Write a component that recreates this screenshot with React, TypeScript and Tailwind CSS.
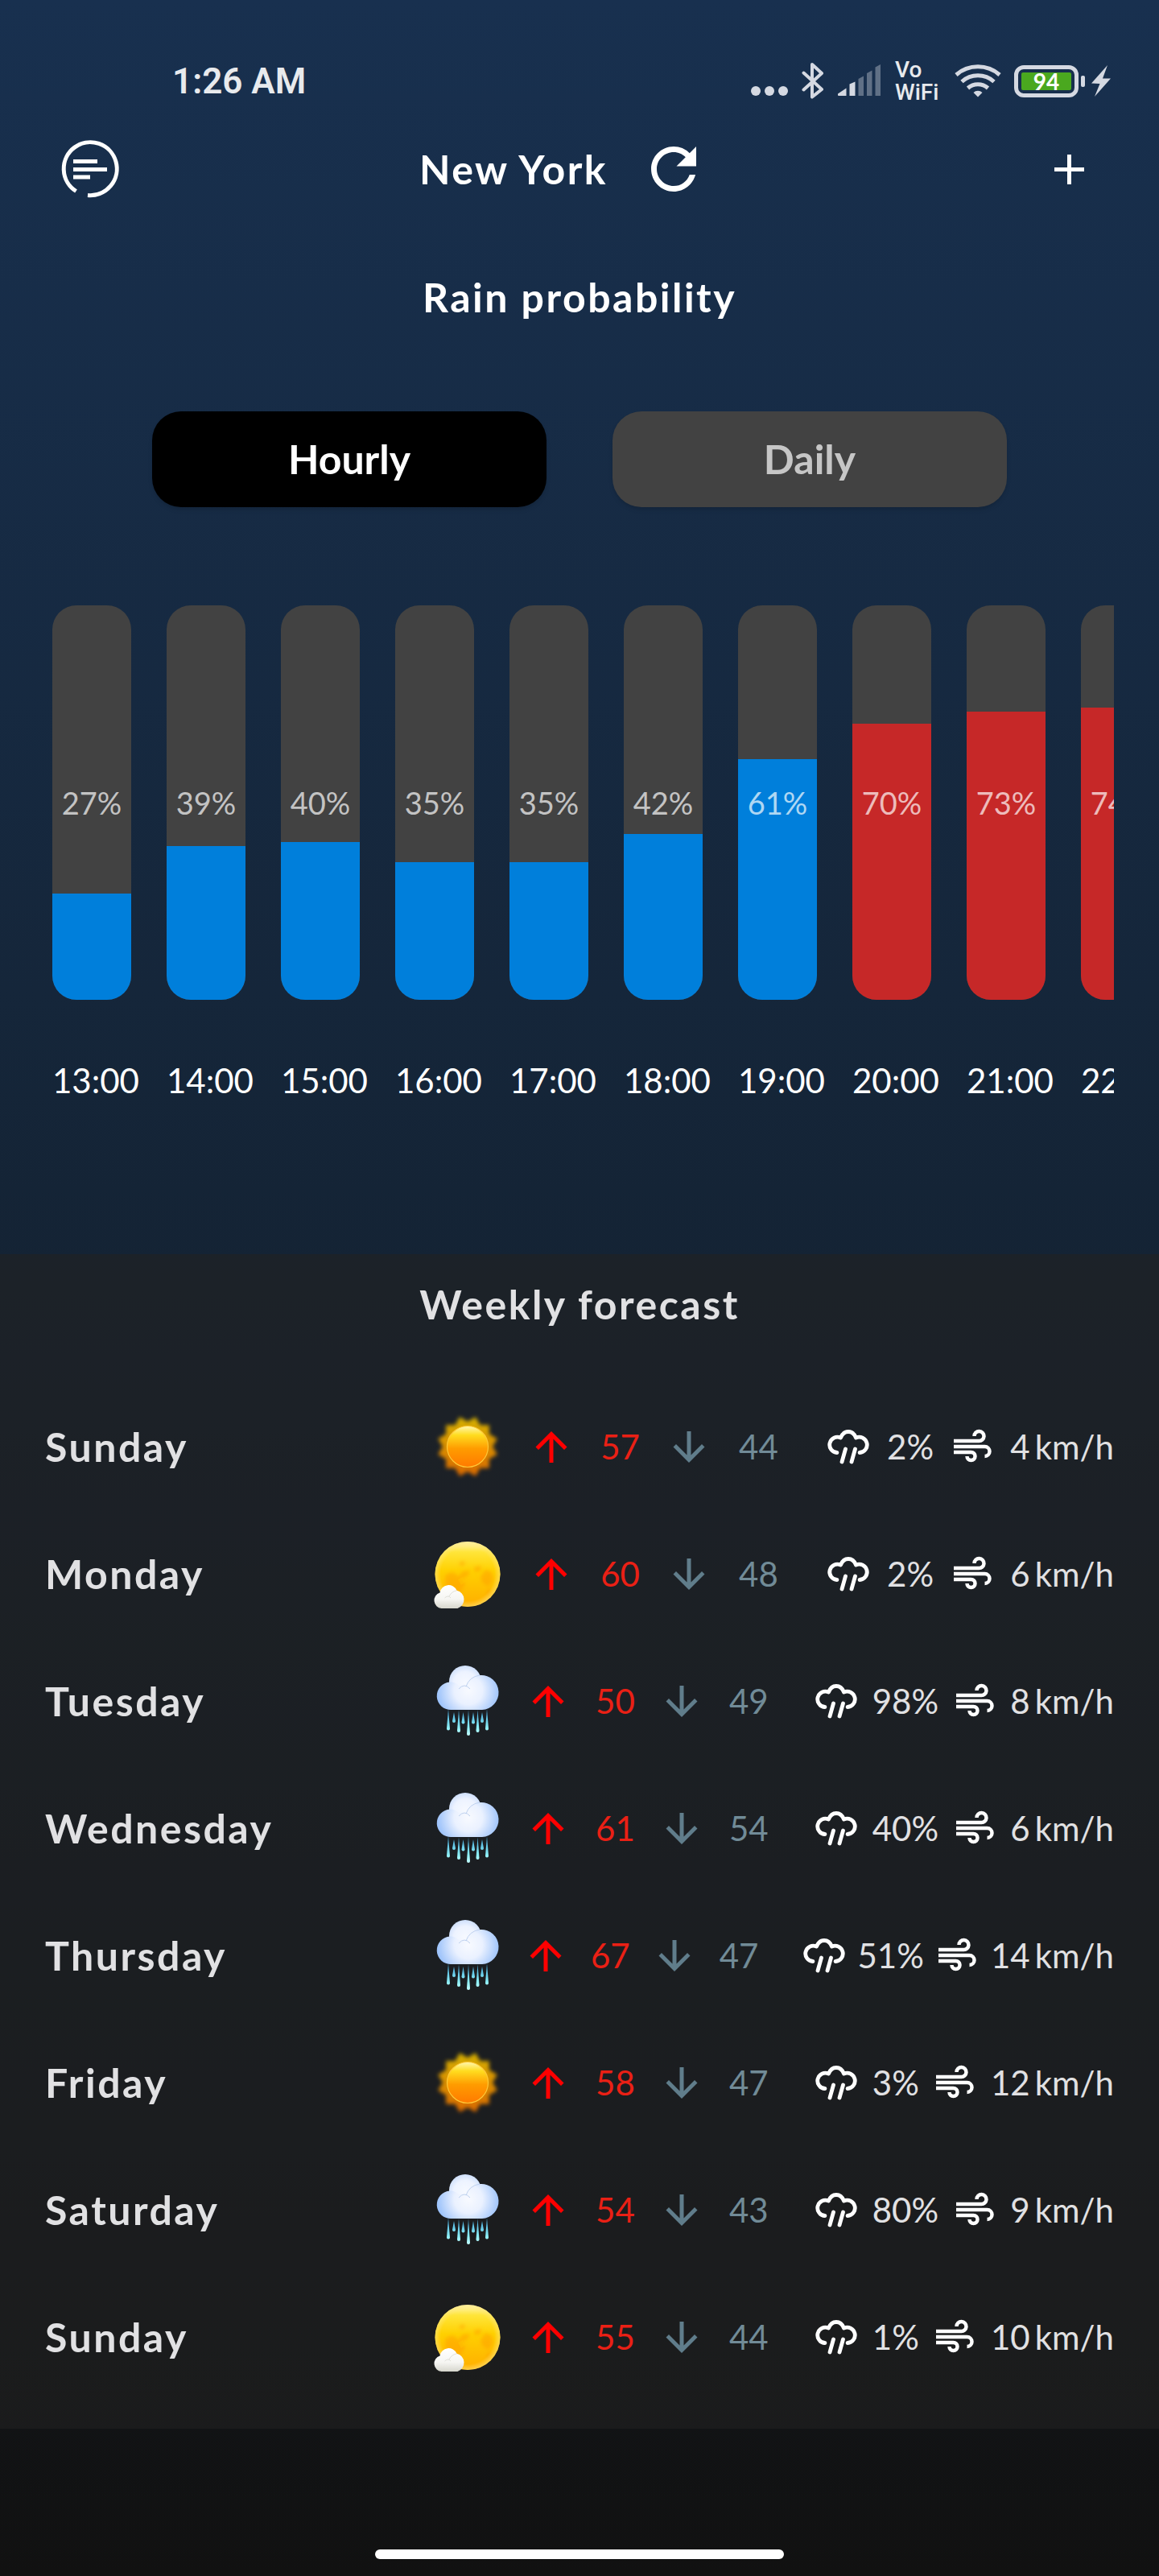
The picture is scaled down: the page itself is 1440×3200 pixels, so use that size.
import { useId, useState } from "react";

type Weather = "sun" | "partly" | "rain";

const hours = [
  { time: "13:00", rain: 27 },
  { time: "14:00", rain: 39 },
  { time: "15:00", rain: 40 },
  { time: "16:00", rain: 35 },
  { time: "17:00", rain: 35 },
  { time: "18:00", rain: 42 },
  { time: "19:00", rain: 61 },
  { time: "20:00", rain: 70 },
  { time: "21:00", rain: 73 },
  { time: "22:00", rain: 74 },
];

const days: { day: string; weather: Weather; high: number; low: number; rain: number; wind: number }[] = [
  { day: "Sunday", weather: "sun", high: 57, low: 44, rain: 2, wind: 4 },
  { day: "Monday", weather: "partly", high: 60, low: 48, rain: 2, wind: 6 },
  { day: "Tuesday", weather: "rain", high: 50, low: 49, rain: 98, wind: 8 },
  { day: "Wednesday", weather: "rain", high: 61, low: 54, rain: 40, wind: 6 },
  { day: "Thursday", weather: "rain", high: 67, low: 47, rain: 51, wind: 14 },
  { day: "Friday", weather: "sun", high: 58, low: 47, rain: 3, wind: 12 },
  { day: "Saturday", weather: "rain", high: 54, low: 43, rain: 80, wind: 9 },
  { day: "Sunday", weather: "partly", high: 55, low: 44, rain: 1, wind: 10 },
];

function StatusBar() {
  return (
    <div className="flex h-[70px] items-center justify-between pr-[60px] pl-[214px] text-[#d5d9e2]">
      <span className="font-['Roboto',sans-serif] text-[44px] leading-[70px] font-semibold text-[#e8eaed]">1:26 AM</span>
      <div className="flex items-center gap-4">
        <svg width="48" height="48" viewBox="0 0 48 48" fill="currentColor" aria-label="More notifications">
          <circle cx="7" cy="36" r="6" />
          <circle cx="24" cy="36" r="6" />
          <circle cx="41" cy="36" r="6" />
        </svg>
        <svg width="28" height="48" viewBox="0 0 28 48" fill="none" stroke="currentColor" strokeWidth="4" strokeLinecap="round" strokeLinejoin="round" aria-label="Bluetooth">
          <path d="M2.5 13.5 25 34 13 43.5V3L25 14 2.5 34.500" />
        </svg>
        <svg width="56" height="48" viewBox="0 0 56 48" fill="currentColor" aria-label="Signal">
          <path d="M1 39.500 11.500 32.500V42H2Q1 42 1 41Z" />
          <path d="M15.500 27.500 22.500 24.500V42H15.500Z" />
          <g opacity=".38">
            <path d="M26.500 21 33 17.500V42H26.500Z" />
            <path d="M37 14 43.500 10.500V42H37Z" />
            <path d="M47.500 6.500 54 3V42H47.500Z" />
          </g>
        </svg>
        <div className="flex w-[58px] flex-col font-['Roboto',sans-serif] text-[28px] leading-7 font-medium text-[#e8eaed]">
          <span>Vo</span>
          <span>WiFi</span>
        </div>
        <svg width="58" height="48" viewBox="0 0 58 48" fill="none" stroke="currentColor" strokeWidth="5" strokeLinecap="butt" aria-label="Wi-Fi">
          <path d="M2 16A41 41 0 0 1 56 16" />
          <path d="M9 24.500A30 30 0 0 1 49 24.500" />
          <path d="M16.500 32.500A19 19 0 0 1 41.500 32.500" />
          <path d="M29 43.500 23.500 38A8 8 0 0 1 34.500 38Z" fill="currentColor" stroke="none" />
        </svg>
        <div className="flex items-center gap-2">
          <div className="flex items-center gap-[3px]">
            <div className="flex h-10 w-20 rounded-xl border-[5px] border-[#d5d9e2] p-1">
              <span className="flex flex-1 items-center justify-center rounded-xs bg-[#4aa81f] font-['Lato',sans-serif] text-[28px] leading-none font-bold text-white">94</span>
            </div>
            <span className="h-[14px] w-[5px] rounded-xs bg-[#d5d9e2]" />
          </div>
          <svg width="24" height="48" viewBox="0 0 24 48" fill="currentColor" aria-label="Charging">
            <path d="M20 4 0 26.500 10.500 27 4 43 24 20.500H14Z" />
          </svg>
        </div>
      </div>
    </div>
  );
}

function Header() {
  return (
    <header className="flex items-center justify-between px-[70px] pt-8">
      <button type="button" aria-label="Menu" className="size-[84px]">
        <svg width="84" height="84" viewBox="0 0 84 84" fill="none" stroke="white" strokeWidth="5">
          <path d="M24.500 69.500A33 33 0 1 1 39 74.500" />
          <path d="M21 32.500H51M21 42.500H63M21 52H42" />
        </svg>
      </button>
      <div className="flex items-center gap-10 pr-10">
        <h1 className="text-[50px] leading-[70px] font-bold tracking-wider">New York</h1>
        <button type="button" aria-label="Refresh" className="size-[84px]">
          <svg width="84" height="84" viewBox="0 0 24 24" fill="white">
            <path d="M17.650 6.350A7.958 7.958 0 0 0 12 4c-4.420 0-7.990 3.580-7.990 8s3.570 8 7.990 8c3.730 0 6.840-2.550 7.730-6h-2.080A5.990 5.990 0 0 1 12 18c-3.310 0-6-2.690-6-6s2.690-6 6-6c1.660 0 3.140.690 4.220 1.780L13 11h7V4l-2.350 2.350z" />
          </svg>
        </button>
      </div>
      <button type="button" aria-label="Add city" className="size-[84px]">
        <svg width="84" height="84" viewBox="0 0 84 84" stroke="white" strokeWidth="5">
          <path d="M42.500 24V61M24 42.500H61" />
        </svg>
      </button>
    </header>
  );
}

function Tab({ label, active, onSelect }: { label: string; active: boolean; onSelect: () => void }) {
  return (
    <button
      type="button"
      aria-pressed={active}
      onClick={onSelect}
      className={
        active
          ? "h-[119px] flex-1 rounded-[36px] bg-black text-[50px] font-bold text-white shadow-md"
          : "h-[119px] flex-1 rounded-[36px] bg-[#424242] text-[50px] font-bold text-[#c6c6c6] shadow-md"
      }
    >
      {label}
    </button>
  );
}

function HourColumn({ time, rain }: { time: string; rain: number }) {
  return (
    <li className="flex w-[98px] shrink-0 flex-col gap-[70px]">
      <div className="relative flex h-[490px] flex-col justify-end overflow-hidden rounded-[30px] bg-[#424242]">
        <div className={rain >= 70 ? "bg-[#c62828]" : "bg-[#007fdb]"} style={{ height: `${rain}%` }} />
        <span className="absolute inset-0 flex items-center justify-center text-[38px] text-white/70">{rain}%</span>
      </div>
      <span className="text-[42px] leading-[60px] whitespace-nowrap">{time}</span>
    </li>
  );
}

function SunIcon() {
  const id = useId();
  const rays = Array.from({ length: 24 }, (_, i) => {
    const angle = ((i * 15 + 15) * Math.PI) / 180;
    const r = i % 2 === 0 ? 38 : 31;
    return `${42 + r * Math.sin(angle)},${45 - r * Math.cos(angle)}`;
  }).join(" ");
  return (
    <svg width="84" height="90" viewBox="0 0 84 90" aria-label="Sunny">
      <defs>
        <linearGradient id={`${id}r`} x1="0" y1="0" x2="0" y2="1">
          <stop offset="0" stopColor="#d6b000" />
          <stop offset=".5" stopColor="#d98f00" />
          <stop offset="1" stopColor="#d96800" />
        </linearGradient>
        <linearGradient id={`${id}c`} x1="0" y1="0" x2="0" y2="1">
          <stop offset="0" stopColor="#fff7b0" />
          <stop offset=".22" stopColor="#ffdc1f" />
          <stop offset=".55" stopColor="#ff9c00" />
          <stop offset="1" stopColor="#ff7a00" />
        </linearGradient>
        <filter id={`${id}b`} x="-20%" y="-20%" width="140%" height="140%">
          <feGaussianBlur stdDeviation="2.600" />
        </filter>
      </defs>
      <polygon points={rays} fill={`url(#${id}r)`} filter={`url(#${id}b)`} />
      <circle cx="42" cy="45" r="25.500" fill={`url(#${id}c)`} stroke="#ffc838" strokeWidth="1.200" />
    </svg>
  );
}

function PartlyIcon() {
  const id = useId();
  return (
    <svg width="84" height="90" viewBox="0 0 84 90" className="overflow-visible" aria-label="Partly cloudy">
      <defs>
        <linearGradient id={`${id}s`} x1="0" y1="0" x2="0" y2="1">
          <stop offset="0" stopColor="#fff6b8" />
          <stop offset=".16" stopColor="#ffe53a" />
          <stop offset=".45" stopColor="#ffd000" />
          <stop offset="1" stopColor="#ffae00" />
        </linearGradient>
        <radialGradient id={`${id}e`}>
          <stop offset=".82" stopColor="#ffe680" stopOpacity="0" />
          <stop offset="1" stopColor="#ffe680" stopOpacity=".6" />
        </radialGradient>
        <linearGradient id={`${id}w`} x1="0" y1="59" x2="0" y2="88" gradientUnits="userSpaceOnUse">
          <stop offset="0" stopColor="#ffffff" />
          <stop offset=".6" stopColor="#f6f6f3" />
          <stop offset="1" stopColor="#d6d6cd" />
        </linearGradient>
        <filter id={`${id}b`} x="-20%" y="-20%" width="140%" height="140%">
          <feGaussianBlur stdDeviation="2" />
        </filter>
      </defs>
      <circle cx="42" cy="45.500" r="40.500" fill={`url(#${id}s)`} />
      <g fill="#ff9d00" opacity=".5" filter={`url(#${id}b)`}>
        <path d="M14 47q6-5 12-3l4 5 6-7 9-1-3 7-7 3 4 7-6 10-13-2-6-8z" />
        <path d="M50 37l9-2-1 6-7 2zM64 40l8 3 2 9-6 9-8-5-2-7z" />
        <path d="M66 66l5-3-1 7-5 3zM32 31l5-2 2 4-6 3z" />
      </g>
      <path d="M30 52l6-3 3 6-5 4zM52 47l5 5-4 6z" fill="#ffc800" opacity=".4" />
      <circle cx="42" cy="45.500" r="40.500" fill={`url(#${id}e)`} />
      <path d="M9.500 88A10 10 0 0 1 7.500 68.500A11 11 0 0 1 28.500 65.800A11.500 11.500 0 0 1 29.500 88Z" fill={`url(#${id}w)`} />
      <path d="M19 73Q22 67 28.500 65.800M13.500 75Q18 71 21 75" stroke="#d8d8d0" strokeWidth=".8" fill="none" />
    </svg>
  );
}

function RainIcon() {
  const id = useId();
  const drops = [
    [18, 82.5, 55],
    [25, 73, 59],
    [31, 85, 56],
    [36.5, 74.5, 59],
    [43, 89, 56],
    [49, 74.5, 59],
    [54.5, 85, 56],
    [60, 73, 59],
    [66, 82.5, 55],
  ];
  return (
    <svg width="84" height="90" viewBox="0 0 84 90" aria-label="Rain">
      <defs>
        <linearGradient id={`${id}d`} x1="0" y1="55" x2="0" y2="88" gradientUnits="userSpaceOnUse">
          <stop offset="0" stopColor="#3d9fd6" />
          <stop offset=".7" stopColor="#8df0f8" />
          <stop offset="1" stopColor="#c4ffff" />
        </linearGradient>
        <radialGradient id={`${id}t`} cx=".5" cy=".55" r=".55">
          <stop offset="0" stopColor="#f6f9ff" />
          <stop offset=".65" stopColor="#edf3ff" />
          <stop offset="1" stopColor="#cfe0fc" />
        </radialGradient>
        <radialGradient id={`${id}c`} cx="43" cy="32" r="39" gradientUnits="userSpaceOnUse">
          <stop offset="0" stopColor="#f8faff" />
          <stop offset=".45" stopColor="#eaf1ff" />
          <stop offset="1" stopColor="#9cc2fa" />
        </radialGradient>
      </defs>
      {drops.map(([x, bottom, top]) => (
        <path
          key={x}
          d={`M${x} ${top}L${x + 2} ${bottom - 3}A2 2 0 1 1 ${x - 2} ${bottom - 3}Z`}
          fill={`url(#${id}d)`}
        />
      ))}
      <circle cx="39" cy="21" r="20" fill={`url(#${id}t)`} />
      <path d="M22 56A17 17 0 0 1 20 21.500Q26 21 31 26L41 28Q45 13.500 58 13A21 21 0 0 1 60 56Z" fill={`url(#${id}c)`} />
      <path d="M40 27Q44 15 57 13M31 30Q38 22 45 30" fill="none" stroke="#b9cdec" strokeWidth=".9" />
    </svg>
  );
}

function WeatherIcon({ kind }: { kind: Weather }) {
  if (kind === "sun") return <SunIcon />;
  if (kind === "partly") return <PartlyIcon />;
  return <RainIcon />;
}

function Arrow({ down }: { down?: boolean }) {
  return (
    <svg
      width="84"
      height="60"
      viewBox="0 0 84 60"
      fill="currentColor"
      className={down ? "text-[#607d8b]" : "text-[#ff0000]"}
      aria-label={down ? "Low" : "High"}
    >
      {down ? (
        <path d="M61.500 30.500 58 27 44.500 40.500V11H39.500V40.500L26 27 22.500 30.500 42 50Z" />
      ) : (
        <path d="M22.500 30.500 26 34 39.500 20.500V50H44.500V20.500L58 34 61.500 30.500 42 11Z" />
      )}
    </svg>
  );
}

function RainChanceIcon() {
  return (
    <svg width="56" height="56" viewBox="0 0 56 56" fill="none" stroke="white" strokeWidth="4.800" strokeLinecap="round" strokeLinejoin="round" className="ml-10" aria-label="Chance of rain">
      <path d="M14 35.500A9.700 9.700 0 1 1 18.500 17C20.500 12 24 9.500 28 9.500S35.500 12 37.500 17A9.700 9.700 0 1 1 42 35.500" />
      <path d="M24.500 31 20 47M36.500 31 32 47" />
    </svg>
  );
}

function WindIcon() {
  return (
    <svg width="56" height="56" viewBox="0 0 56 56" fill="none" stroke="white" strokeWidth="4.500" aria-label="Wind">
      <path d="M5 21H36A6 6 0 1 0 30.500 15" />
      <path d="M5 28H43.500A6 6 0 0 1 43.500 40" />
      <path d="M5 35H26.500A5 5 0 1 1 21.500 40" />
    </svg>
  );
}

export default function App() {
  const [view, setView] = useState("Hourly");
  return (
    <div className="min-h-screen bg-linear-to-b from-[#18304f] via-[#142334] to-[#111111] font-['Lato',sans-serif] text-white">
      <div className="pt-[66px]">
        <StatusBar />
        <Header />
      </div>

      <main>
        <section className="pt-[82px] pb-[186px]">
          <h2 className="text-center text-[50px] leading-[70px] font-bold tracking-wider">Rain probability</h2>
          <div className="mt-[107px] flex gap-[82px] px-[189px]">
            <Tab label="Hourly" active={view === "Hourly"} onSelect={() => setView("Hourly")} />
            <Tab label="Daily" active={view === "Daily"} onSelect={() => setView("Daily")} />
          </div>
          <ul className="mx-14 mt-[122px] flex gap-11 overflow-hidden pl-[9px]">
            {hours.map((hour) => (
              <HourColumn key={hour.time} time={hour.time} rain={hour.rain} />
            ))}
          </ul>
        </section>

        <section className="bg-[#212121]/60 px-14 pt-[27px] pb-[35px] text-[#e1e1e3]">
          <h2 className="text-center text-[50px] leading-[70px] font-bold tracking-wider">Weekly forecast</h2>
          <ul className="mt-[63px]">
            {days.map((item, index) => (
              <li key={index} className="flex h-[158px] items-center text-[42px]">
                <h3 className="min-w-0 flex-4 text-[50px] leading-[70px] font-bold tracking-wider">{item.day}</h3>
                <div className="flex min-w-0 flex-7 items-center justify-between whitespace-nowrap">
                  <WeatherIcon kind={item.weather} />
                  <Arrow />
                  <span className="text-[#ea2015]">{item.high}</span>
                  <Arrow down />
                  <span className="text-[#718b97]">{item.low}</span>
                  <RainChanceIcon />
                  <span>{item.rain}%</span>
                  <WindIcon />
                  <span className="flex gap-[6px]">
                    <span>{item.wind}</span>
                    <span>km/h</span>
                  </span>
                </div>
              </li>
            ))}
          </ul>
        </section>
      </main>

      <footer className="flex justify-center pt-[150px] pb-[21px]">
        <span className="h-3 w-[508px] rounded-full bg-white" />
      </footer>
    </div>
  );
}
